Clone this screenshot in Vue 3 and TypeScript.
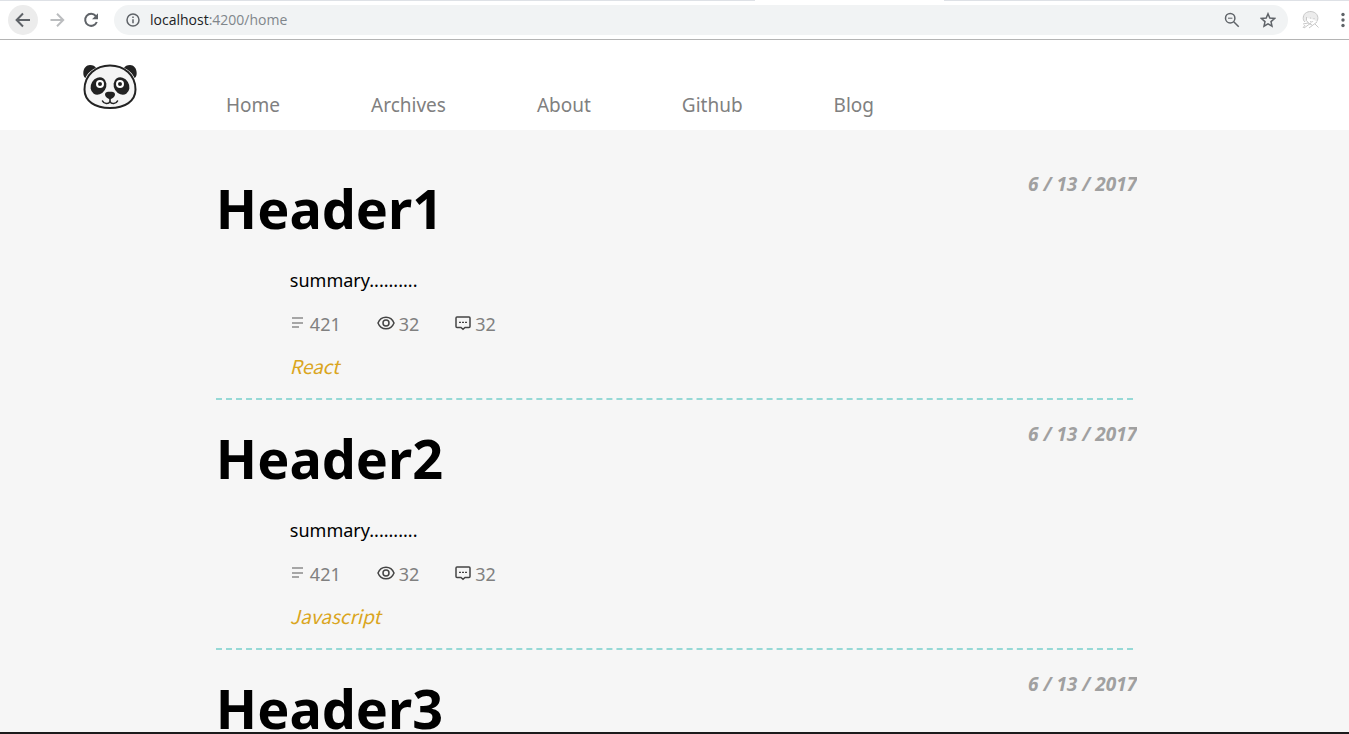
<script setup lang="ts">
interface Post {
  title: string
  date: string
  summary: string
  words: number
  views: number
  comments: number
  tag: string
}

const links: string[] = ['Home', 'Archives', 'About', 'Github', 'Blog']

const posts: Post[] = ['React', 'Javascript', 'React'].map((tag, i) => ({
  title: `Header${i + 1}`,
  date: '6 / 13 / 2017',
  summary: 'summary..........',
  words: 421,
  views: 32,
  comments: 32,
  tag,
}))
</script>

<template>
  <div class="window">
    <div class="tabline"><span class="before"></span><span class="after"></span></div>
    <div class="toolbar">
      <button class="tool back" aria-label="Back">
        <svg width="16" height="16" viewBox="0 0 16 16"><path d="M15 8H2M8 1.5 1.6 8 8 14.5" /></svg>
      </button>
      <button class="tool forward" aria-label="Forward">
        <svg width="16" height="16" viewBox="0 0 16 16"><path d="M1.5 8H14M8 1.8 14.2 8 8 14.2" /></svg>
      </button>
      <button class="tool reload" aria-label="Reload">
        <svg width="16" height="16" viewBox="0 0 16 16">
          <path d="M12.8 4A6 6 0 1 0 13.8 10" />
          <path class="solid" d="M15 1.2v6H9z" />
        </svg>
      </button>
      <div class="omnibox">
        <svg width="14" height="14" viewBox="0 0 14 14">
          <circle cx="7" cy="7" r="6" />
          <path d="M7 6.2v4M7 3.4v1.5" />
        </svg>
        <span class="url"><b>localhost</b>:4200/home</span>
        <button class="tool zoom" aria-label="Zoom">
          <svg width="16" height="16" viewBox="0 0 16 16">
            <circle cx="6.2" cy="6.2" r="4.7" />
            <path d="M9.7 9.7l5 5" />
            <path class="thin" d="M4 6.2h4.4" />
          </svg>
        </button>
        <button class="tool star" aria-label="Bookmark">
          <svg width="16" height="16" viewBox="0 0 16 16">
            <path d="M8 1.8l1.8 4.3 4.7.4-3.5 3.1 1 4.6L8 11.8l-4 2.4 1-4.6L1.5 6.5l4.7-.4z" />
          </svg>
        </button>
      </div>
      <button class="tool extension" aria-label="Extension">
        <svg width="18" height="20" viewBox="0 0 18 20">
          <path class="fill" d="M4 12C0 10 1 4 4.500 2.500 8 .5 14 1.500 15.500 6c.8 2 .2 4-.5 5.500L11 9.500 5 8z" />
          <path d="M3 12C0 10 1 4 4.5 2.5 8 .5 14 1.5 15.500 6c.8 2 .2 4-.5 5.500M4.500 7v3.500l2 2.500M8 8h1M11.500 8.500h1M8 11.500c1.500 1 2.500.5 3-.5M1 14l5-1 4 2M2 18l7-5M7 18l8-6M13 14l3.500 3.500M1 18l2-3" />
        </svg>
      </button>
      <button class="tool menu" aria-label="Menu">
        <svg width="4" height="16" viewBox="0 0 4 16">
          <circle cx="2" cy="2.5" r="1.7" /><circle cx="2" cy="8" r="1.7" /><circle cx="2" cy="13.5" r="1.7" />
        </svg>
      </button>
    </div>

    <header class="site">
      <a class="logo" href="#" aria-label="Panda">
        <svg width="54" height="48" viewBox="0 0 54 48">
          <g fill="#222">
            <path d="M.5 12C-.5 6 3 2 7 2c3 0 5 1 6 3C8 7 4 11 2.500 15 1.500 14.500.8 13.500.5 12z" />
            <path d="M53.500 12C54.500 6 51 2 47 2c-3 0-5 1-6 3 5 2 9 6 10.500 10 1-.5 1.700-1.500 2-3z" />
          </g>
          <path d="M27 2.500C41 2.500 52.500 12 52.500 26.500 52.500 38 42 45 27 45S1.500 38 1.500 26.500C1.500 12 13 2.500 27 2.500z" fill="#f4f4f4" stroke="#222" stroke-width="2" />
          <g fill="#222">
            <ellipse cx="15.500" cy="23" rx="7.500" ry="9" transform="rotate(32 15.500 23)" />
            <ellipse cx="38.500" cy="23" rx="7.500" ry="9" transform="rotate(-32 38.500 23)" />
            <path d="M22 31.500c0-2.200 2-2.700 5-2.700s5 .5 5 2.700c0 2.200-3.300 4.700-5 4.700s-5-2.500-5-4.700z" />
          </g>
          <g fill="#222" stroke="#fff" stroke-width="2">
            <circle cx="17" cy="21" r="3" />
            <circle cx="37" cy="21" r="3" />
          </g>
          <path d="M27 35v3.500c-1.200 2.800-6 2.800-7.500-.5M27 38.500c1.200 2.800 6 2.800 7.500-.5" fill="none" stroke="#222" stroke-width="1.600" stroke-linecap="round" />
        </svg>
      </a>
      <nav>
        <a v-for="link in links" :key="link" href="#">{{ link }}</a>
      </nav>
    </header>

    <main>
      <article v-for="post in posts" :key="post.title">
        <div class="heading">
          <h1>{{ post.title }}</h1>
          <time>{{ post.date }}</time>
        </div>
        <div class="details">
          <p>{{ post.summary }}</p>
          <div class="stats">
            <span class="stat words">
              <svg width="16" height="16" viewBox="0 0 16 16"><path d="M2 3h11M2 8h11M2 12h7" /></svg>
              {{ post.words }}
            </span>
            <span class="stat">
              <svg width="18" height="16" viewBox="0 0 18 16">
                <path d="M1 8c1.500-3.800 4.500-5.800 8-5.800s6.500 2 8 5.800c-1.500 3.800-4.500 5.800-8 5.800S2.500 11.800 1 8z" />
                <circle cx="9" cy="8" r="3" />
              </svg>
              {{ post.views }}
            </span>
            <span class="stat">
              <svg width="16" height="16" viewBox="0 0 16 16">
                <path d="M2 2h12q1 0 1 1v8.500q0 1-1 1h-4L8 14.300 6 12.500H2q-1 0-1-1V3q0-1 1-1z" />
                <path class="dots" d="M4 7.300h2M7 7.300h2M10 7.300h2" />
              </svg>
              {{ post.comments }}
            </span>
          </div>
          <a class="tag" href="#">{{ post.tag }}</a>
        </div>
      </article>
    </main>
    <div class="taskbar"></div>
  </div>
</template>

<style>
body {
  margin: 0;
}
</style>

<style scoped>
.window {
  height: 100vh;
  display: flex;
  flex-direction: column;
  overflow: hidden;
  background: #f6f6f6;
  font-family: "Noto Sans", "Open Sans", sans-serif;
  font-size: 18px;
  line-height: 28px;
}
.window > * {
  flex: none;
}
.tabline {
  display: flex;
  justify-content: space-between;
  height: 1px;
  background: #fff;
}
.tabline span {
  background: #dee1e6;
}
.before {
  width: 56%;
}
.after {
  width: 30%;
}
.toolbar {
  display: flex;
  align-items: center;
  height: 38px;
  padding-left: 8px;
  background: #fff;
  border-bottom: 1px solid #b4b4b4;
}
.tool {
  display: flex;
  align-items: center;
  justify-content: center;
  flex: none;
  width: 30px;
  height: 30px;
  padding: 0;
  border: 0;
  border-radius: 50%;
  background: none;
}
.toolbar svg {
  flex: none;
  fill: none;
  stroke: #5f6368;
  stroke-width: 2;
}
.back {
  background: #ececec;
}
.forward {
  margin-left: 4px;
}
.toolbar .forward svg {
  stroke: #bbbdbf;
}
.reload {
  margin-left: 4px;
}
.toolbar .solid {
  fill: #5f6368;
  stroke: none;
}
.toolbar .thin {
  stroke-width: 1;
}
.omnibox {
  display: flex;
  align-items: center;
  flex: 1;
  height: 30px;
  margin-left: 8px;
  padding: 0 5px 0 12px;
  border-radius: 15px;
  background: #f1f3f4;
}
.toolbar .omnibox svg {
  stroke-width: 1.5;
}
.url {
  flex: 1;
  margin-left: 10px;
  color: #80868b;
  font-family: "Open Sans", sans-serif;
  font-size: 14px;
}
.url b {
  color: #202124;
  font-weight: 400;
}
.star {
  margin-left: 6px;
}
.extension {
  margin-left: 8px;
}
.toolbar .extension svg {
  stroke: #c8c8c8;
  stroke-width: 1;
}
.extension .fill {
  fill: #ececec;
  stroke: none;
}
.menu {
  width: 4px;
  margin: 0 4px 0 15px;
}
.toolbar .menu svg {
  fill: #5f6368;
  stroke: none;
}
.site {
  display: flex;
  height: 90px;
  background: #fff;
}
.logo {
  width: 143px;
  padding: 23px 0 0 83px;
}
nav {
  display: flex;
  gap: 91px;
  padding-top: 51px;
  font-size: 19px;
}
nav a {
  color: #808080;
  text-decoration: none;
}
.window main {
  flex: 1;
  min-height: 0;
  overflow: hidden;
  width: 68%;
  margin: 0 auto;
  padding: 20px 4px 0;
}
article {
  padding: 20px 0;
  border-bottom: 2px dashed #96d9d6;
}
.heading {
  display: flex;
  justify-content: space-between;
}
h1 {
  margin: 0;
  font-size: 54px;
  line-height: 76px;
}
time {
  margin-right: -4px;
  color: #a0a0a0;
  font-size: 19px;
  font-weight: 700;
  font-style: italic;
}
.details {
  display: flex;
  flex-direction: column;
  align-items: flex-start;
  gap: 16px;
  margin-left: 74px;
  padding-top: 20px;
}
p {
  margin: 0;
}
.stats {
  display: flex;
  gap: 36px;
  color: #808080;
}
.stat {
  display: flex;
  gap: 4px;
}
.stat svg {
  margin-top: 5px;
  fill: none;
  stroke: #444;
  stroke-width: 1.5;
}
.words svg {
  stroke: #a6a6a6;
  stroke-width: 2;
}
.stat .dots {
  stroke-width: 1.2;
}
.tag {
  color: #daa520;
  font-family: "Noto Sans CJK SC", sans-serif;
  font-size: 19px;
  font-style: italic;
  line-height: 24px;
  text-decoration: none;
}
.taskbar {
  height: 2px;
  background: #1c1c1c;
}
</style>
